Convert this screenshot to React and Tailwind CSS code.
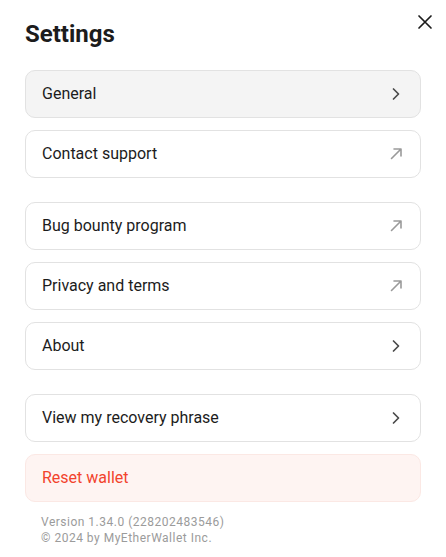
import React from 'react';

const Chevron = () => (
  <svg width="16" height="16" viewBox="0 0 16 16" fill="none" className="text-[#4a4a4a]">
    <path d="M5.5 3 L10.5 8 L5.5 13" stroke="currentColor" strokeWidth="1.7" strokeLinecap="round" strokeLinejoin="round" />
  </svg>
);

const External = () => (
  <svg width="16" height="16" viewBox="0 0 16 16" fill="none" className="text-[#9a9a9a]">
    <path d="M3.5 12.5 L13 3 M6 3 H13 V10" stroke="currentColor" strokeWidth="1.6" strokeLinecap="round" strokeLinejoin="round" />
  </svg>
);

const Row = ({ label, icon, active }) => (
  <button
    className={`flex h-12 w-full items-center justify-between rounded-[10px] border border-[#e2e2e2] pl-4 pr-4 text-left text-[16px] text-[#1c1c1c] ${
      active ? 'bg-[#f4f4f4]' : 'bg-white'
    }`}
  >
    <span>{label}</span>
    {icon === 'chevron' ? <Chevron /> : <External />}
  </button>
);

const App = () => {
  return (
    <div className="relative min-h-[557px] w-[446px] bg-white px-[25px] pt-[19px] font-['Roboto',sans-serif]">
      {/* close button */}
      <button className="absolute right-[13px] top-[14px] text-[#1c1c1c]">
        <svg width="16" height="16" viewBox="0 0 16 16" fill="none">
          <path d="M2 2 L14 14 M14 2 L2 14" stroke="currentColor" strokeWidth="1.7" strokeLinecap="round" />
        </svg>
      </button>

      <h1 className="text-[24px] font-bold leading-[30px] text-[#1c1c1c]">Settings</h1>

      <div className="mt-[21px] flex flex-col gap-3">
        <Row label="General" icon="chevron" active />
        <Row label="Contact support" icon="external" />
      </div>

      <div className="mt-6 flex flex-col gap-3">
        <Row label="Bug bounty program" icon="external" />
        <Row label="Privacy and terms" icon="external" />
        <Row label="About" icon="chevron" />
      </div>

      <div className="mt-6 flex flex-col gap-3">
        <Row label="View my recovery phrase" icon="chevron" />
        <button className="flex h-12 w-full items-center rounded-[10px] border border-[#fbe8e4] bg-[#fef4f2] px-4 text-left text-[16px] text-[#f2432c]">
          Reset wallet
        </button>
      </div>

      <div className="mt-3 pl-4 text-[12px] leading-4 tracking-[0.5px] text-[#9b9b9b]">
        <p>Version 1.34.0 (228202483546)</p>
        <p>© 2024 by MyEtherWallet Inc.</p>
      </div>
    </div>
  );
};

export default App;
